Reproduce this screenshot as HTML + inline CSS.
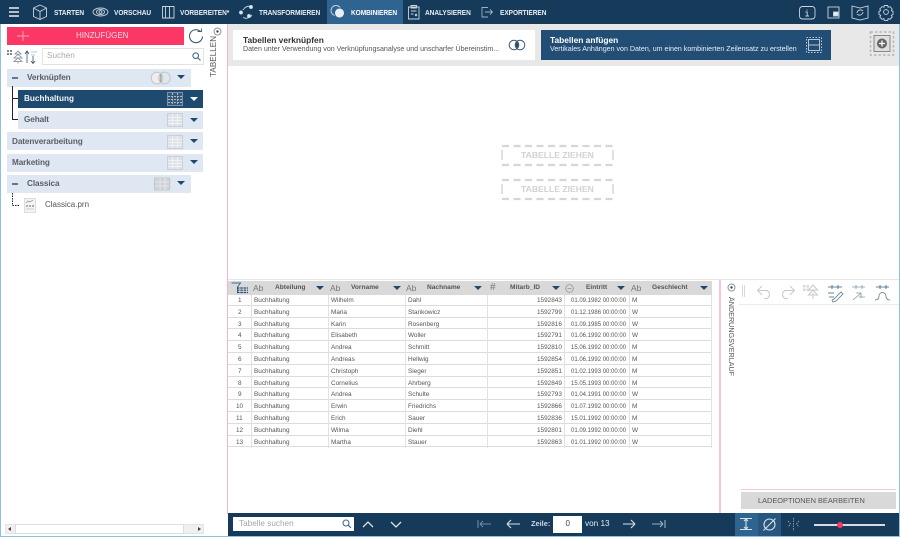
<!DOCTYPE html>
<html><head><meta charset="utf-8">
<style>
html,body{margin:0;padding:0;background:#fff}
#p{position:relative;width:900px;height:537px;overflow:hidden;background:#fff;font-family:"Liberation Sans",sans-serif;color:#444}
#p div,#p svg,#p span.a{position:absolute}
.t{white-space:nowrap;line-height:1}
.nav{font-size:7.2px;font-weight:bold;color:#e8eef4;top:9px;letter-spacing:-.05px;transform-origin:left top;transform:scaleX(.91)}
.bar{background:#dfe7f3;height:18px}
.bl{font-size:8.2px;font-weight:bold;color:#5a5f66;letter-spacing:-.1px}
.tri{width:0;height:0;border-left:4.5px solid transparent;border-right:4.5px solid transparent;border-top:4.5px solid #1f4a70}
.r{height:11.8px;left:228px;width:484px;border-bottom:1px solid #dcdcdc;box-sizing:border-box;font-size:6.4px;color:#555;line-height:14px}
.r span{position:absolute;top:0;white-space:nowrap}
.r span.d{font-size:6px;left:343px}
.th{font-size:6.6px;font-weight:bold;color:#555;top:285px}
.ab{font-size:8.5px;color:#777;top:283.5px}
.htri{top:286px;width:0;height:0;border-left:4px solid transparent;border-right:4px solid transparent;border-top:4px solid #1f4a70}
.dz{font-size:8.6px;font-weight:bold;color:#d2d2d2;left:521px}
</style></head><body><div id="p">
<!-- top bar -->
<div style="left:0;top:0;width:900px;height:24px;background:#163a59"></div>
<div style="left:327px;top:0;width:76px;height:24px;background:#2f6490"></div>
<svg style="left:0;top:0" width="900" height="24" fill="none" stroke="#c8d5df" stroke-width=".9">
<path d="M9 8h10M9 12h10M9 16h10" stroke-width="1.4" stroke="#e8eef4"/>
<path d="M40 5l6.500 3v8.500L40 19.500l-6.500-3V8zM33.500 8l6.500 3.500 6.500-3.500M40 11.500v8"/>
<ellipse cx="100.500" cy="12" rx="7.500" ry="4"/><ellipse cx="100.500" cy="12" rx="4" ry="2.600"/><circle cx="100.500" cy="12" r="1.400"/>
<path d="M162.500 6.500h11.500v11.500h-11.500zM165.500 6.500v11.500M169.500 6.500v11.500"/>
<path d="M243 10a7 7 0 0 1 8-3.500M252 15a7 7 0 0 1-9 2.500"/><circle cx="251" cy="7" r="1.500" fill="#e8eef4"/><circle cx="241" cy="12.500" r="1.500" fill="#e8eef4"/><circle cx="249" cy="16" r="1.500" fill="#e8eef4"/>
<circle cx="336" cy="10.500" r="5"/><circle cx="339.500" cy="13" r="5" fill="#e8eef4" stroke="#2f6490"/>
<path d="M408.500 7h10.500v12h-10.500zM411 5.500h5.500v2.500h-5.500zM411 11h5.500M411 14h2.500M415 14l2 2M417 14l-2 2"/>
<path d="M488 7.500h-6v9.500h6M485 12h7.500M490 9.500l2.500 2.500-2.500 2.500" stroke="#9fb1c0"/>
<rect x="799.500" y="6.500" width="15.500" height="12.500" rx="3"/><path d="M807 9.500v1M805.500 12h1.700v4M805.500 16h3.500" />
<rect x="828" y="7" width="11" height="11"/><rect x="833.500" y="12" width="4.500" height="4" fill="#e8eef4"/>
<path d="M852 6l8 2 8-2v12l-8 2-8-2z"/><path d="M857 13a3.500 3.500 0 0 1 6-2M863 12a3.500 3.500 0 0 1-6 2"/>
<circle cx="886" cy="12" r="2.400"/><path d="M884.300 5.500h3.400l.4 1.800 1.800-.7 2.300 2.300-.9 1.700 1.700.7v3.300l-1.700.7.900 1.700-2.300 2.300-1.800-.7-.4 1.800h-3.400l-.4-1.800-1.800.7-2.300-2.300.9-1.700-1.700-.7v-3.300l1.700-.7-.9-1.700 2.300-2.300 1.800.7z"/>
</svg>
<div class="t nav" style="left:54px">STARTEN</div>
<div class="t nav" style="left:114px">VORSCHAU</div>
<div class="t nav" style="left:180px">VORBEREITEN*</div>
<div class="t nav" style="left:259px">TRANSFORMIEREN</div>
<div class="t nav" style="left:351px;color:#fff">KOMBINIEREN</div>
<div class="t nav" style="left:425px">ANALYSIEREN</div>
<div class="t nav" style="left:500px">EXPORTIEREN</div>

<!-- borders -->
<div style="left:0;top:24px;width:1px;height:513px;background:#8cc3e3"></div>
<div style="left:899px;top:24px;width:1px;height:513px;background:#8cc3e3"></div>
<div style="left:0;top:536px;width:900px;height:1px;background:#8cc3e3"></div>
<div style="left:227px;top:24px;width:1px;height:490px;background:#f9b4cb"></div>

<!-- left panel -->
<div style="left:7px;top:27px;width:177px;height:18px;background:#fb3766"></div>
<svg style="left:16px;top:30px" width="14" height="12" stroke="#ff9cb4" fill="none"><path d="M7 1v10M1 6h12"/></svg>
<div class="t" style="left:76px;top:32px;font-size:8px;color:#ffd9e2">HINZUFÜGEN</div>
<svg style="left:188px;top:28px" width="16" height="17" fill="none" stroke="#3b5d78" stroke-width="1.100"><path d="M12.500 3.500a6.500 6.500 0 1 0 2 5"/><path d="M9.500 3.500h4v-3" stroke-width=".9"/></svg>
<svg style="left:213px;top:27px" width="9" height="9" fill="none" stroke="#8a97a3"><circle cx="4.500" cy="4.500" r="3.500"/><circle cx="4.500" cy="4.500" r="1.200" fill="#33475a" stroke="none"/></svg>
<div class="t" style="left:210px;top:77px;font-size:8px;color:#555;transform:rotate(-90deg);transform-origin:left top;letter-spacing:.1px">TABELLEN</div>

<svg style="left:7px;top:48px" width="34" height="17" fill="none" stroke="#7b8b99" stroke-width=".8"><path d="M0 2h2v2H0zM3 2h2v2H3zM0 5h2v2H0zM3 5h2v2H3z" fill="#7b8b99" stroke="none"/><path d="M11 3l-3 3h6zM11 6.500l-4 3.500h8zM11 10l-4 3.500h8zM11 13.500v2"/><path d="M20 15V3.500M18 6l2-3 2 3M26 8v7.500M24 13l2 2.500 2-2.500" stroke="#33556f"/><path d="M24 4h6M24 7h4" stroke="#aab3bb"/></svg>
<div style="left:42px;top:48px;width:162px;height:17px;box-sizing:border-box;border:1px solid #e2e2e2"></div>
<div class="t" style="left:47px;top:52px;font-size:8.200px;color:#a9a9a9">Suchen</div>
<svg style="left:192px;top:52px" width="9" height="9" fill="none" stroke="#3f6b8e" stroke-width="1.100"><circle cx="3.700" cy="3.700" r="2.800"/><path d="M6 6l2.500 2.500"/></svg>

<!-- tree -->
<div class="bar" style="left:7px;top:69px;width:184px"></div>
<div style="left:12px;top:77px;width:6px;height:1.500px;background:#5d7a94"></div>
<div class="t bl" style="left:27px;top:74px">Verknüpfen</div>
<svg style="left:149px;top:71px" width="24" height="14" fill="none" stroke="#c8c8c8" stroke-width="1.100"><circle cx="8" cy="7" r="5.800" fill="#eee"/><circle cx="15.500" cy="7" r="5.800"/><path d="M11.700 3v8" stroke="#aaa" stroke-width="1.800"/></svg>
<div class="tri" style="left:177px;top:75px"></div>

<svg style="left:11px;top:86px" width="9" height="38" fill="none" stroke="#222" stroke-width="1"><path d="M1.500 0v33.500H7M1.500 12.500H7"/></svg>

<div style="left:18px;top:90px;width:185px;height:18px;background:#1f4a70"></div>
<div class="t" style="left:24px;top:95px;font-size:8.200px;font-weight:bold;color:#f0f4f8">Buchhaltung</div>
<svg style="left:167px;top:92px" width="16" height="14"><rect x=".5" y=".5" width="15" height="13" fill="#36597a" stroke="#7b93a8"/><path d="M1 4.500h14M1 7.500h14M1 10.500h14M5.500 1v12M10.500 1v12" stroke="#a9bac9" stroke-width="1" stroke-dasharray="2 1"/></svg>
<div class="tri" style="left:190px;top:97px;border-top-color:#fff;border-top-width:4px"></div>

<div class="bar" style="left:18px;top:111px;width:185px"></div>
<div class="t bl" style="left:24px;top:116px">Gehalt</div>
<svg style="left:167px;top:113px" width="16" height="14"><rect x=".5" y=".5" width="15" height="13" fill="#dde1e8" stroke="#ccd0d6"/><path d="M1 4.500h14M1 7.500h14M1 10.500h14M5.500 1v12M10.500 1v12" stroke="#f2f2f2"/></svg>
<div class="tri" style="left:190px;top:118px"></div>

<div class="bar" style="left:7px;top:132px;width:196px"></div>
<div class="t bl" style="left:12px;top:137.500px">Datenverarbeitung</div>
<svg style="left:167px;top:135px" width="16" height="14"><rect x=".5" y=".5" width="15" height="13" fill="#dde1e8" stroke="#ccd0d6"/><path d="M1 4.500h14M1 7.500h14M1 10.500h14M5.500 1v12M10.500 1v12" stroke="#f2f2f2"/></svg>
<div class="tri" style="left:190px;top:139px"></div>

<div class="bar" style="left:7px;top:154px;width:196px"></div>
<div class="t bl" style="left:12px;top:159px">Marketing</div>
<svg style="left:167px;top:156px" width="16" height="14"><rect x=".5" y=".5" width="15" height="13" fill="#dde1e8" stroke="#ccd0d6"/><path d="M1 4.500h14M1 7.500h14M1 10.500h14M5.500 1v12M10.500 1v12" stroke="#f2f2f2"/></svg>
<div class="tri" style="left:190px;top:160px"></div>

<div class="bar" style="left:7px;top:175px;width:184px"></div>
<div style="left:12px;top:183px;width:6px;height:1.500px;background:#5d7a94"></div>
<div class="t bl" style="left:27px;top:180px">Classica</div>
<svg style="left:154px;top:177px" width="17" height="14"><rect x=".5" y="1" width="15" height="12" fill="#cfd3d8" stroke="#c4c8cd"/><path d="M1 5h14M1 9h14M6 1v12M11 1v12" stroke="#e6e6e6"/><path d="M16 2v10" stroke="#c4c8cd" stroke-dasharray="1 1"/></svg>
<div class="tri" style="left:177px;top:181px"></div>

<svg style="left:11px;top:193px" width="9" height="15" fill="none" stroke="#222" stroke-dasharray="1.500 1"><path d="M1.500 0v12.500H8"/></svg>
<svg style="left:24px;top:198px" width="12" height="15" fill="none"><rect x=".5" y=".5" width="11" height="14" fill="#f4f4f4" stroke="#ddd"/><path d="M2 5l2-2 2 1 3-2" stroke="#888" stroke-width=".7"/><path d="M2 8h2M5 8h2M8 8h2" stroke="#666" stroke-width="1"/><path d="M2 11h8" stroke="#ccc"/></svg>
<div class="t" style="left:45px;top:201px;font-size:8px;color:#555">Classica.prn</div>

<!-- left scrollbar -->
<div style="left:5px;top:524px;width:199px;height:10px;background:#f0f0f0;border:1px solid #e3e3e3;box-sizing:border-box"></div>
<div style="left:15px;top:524px;width:169px;height:10px;background:#fff;border:1px solid #ddd;box-sizing:border-box"></div>
<div style="left:8px;top:527px;border-right:3px solid #444;border-top:2px solid transparent;border-bottom:2px solid transparent"></div>
<div style="left:198px;top:527px;border-left:3px solid #444;border-top:2px solid transparent;border-bottom:2px solid transparent"></div>

<!-- top grey strip -->
<div style="left:228px;top:24px;width:671px;height:42px;background:#e8e8e8"></div>
<div style="left:233px;top:30px;width:302px;height:30px;background:#fff"></div>
<div class="t" style="left:243px;top:36px;font-size:8.400px;font-weight:bold;color:#333">Tabellen verknüpfen</div>
<div class="t" style="left:243px;top:46px;font-size:7.080px;color:#555">Daten unter Verwendung von Verknüpfungsanalyse und unscharfer Übereinstim...</div>
<svg style="left:508px;top:39px" width="18" height="12" fill="none" stroke="#3f5d78"><circle cx="6" cy="6" r="4.800"/><circle cx="12" cy="6" r="4.800"/><path d="M9 2.500a4.800 4.800 0 0 1 0 7a4.800 4.800 0 0 1 0-7z" fill="#27496a"/></svg>
<div style="left:541px;top:30px;width:290px;height:30px;background:#224e75"></div>
<div class="t" style="left:550px;top:36px;font-size:8.400px;font-weight:bold;color:#fff">Tabellen anfügen</div>
<div class="t" style="left:550px;top:46px;font-size:7.080px;color:#e8eef4">Vertikales Anhängen von Daten, um einen kombinierten Zeilensatz zu erstellen</div>
<svg style="left:805px;top:36px" width="18" height="18" fill="none" stroke="#b6c6d4"><rect x="1.500" y="1.500" width="15" height="15" stroke-dasharray="1.500 1.500"/><rect x="3.500" y="3.500" width="11" height="11"/><path d="M3.500 9h11"/></svg>
<svg style="left:869px;top:30px" width="26" height="26" fill="none"><rect x="1.500" y="2" width="23" height="23" stroke="#b5b5b5" stroke-width="1.500" stroke-dasharray="2.500 2"/><rect x="5" y="5.500" width="16" height="16" stroke="#888" fill="#dfdfdf"/><circle cx="13" cy="13.500" r="5" fill="#666"/><path d="M10 13.500h6M13 10.500v6" stroke="#fff" stroke-width="1.300"/></svg>

<!-- drop zones -->
<svg style="left:500px;top:144px" width="116" height="60" fill="none" stroke="#d6d6d6" stroke-width="2.200">
<path d="M2 2H114" stroke-dasharray="7 4.500"/><path d="M2 21H114" stroke-dasharray="7 4.500"/><path d="M2 6v10M113 6v10" stroke-width="1.500"/>
<path d="M2 36H114" stroke-dasharray="7 4.500"/><path d="M2 55H114" stroke-dasharray="7 4.500"/><path d="M2 40v10M113 40v10" stroke-width="1.500"/>
</svg>
<div class="t dz" style="top:151px">TABELLE ZIEHEN</div>
<div class="t dz" style="top:185px">TABELLE ZIEHEN</div>

<!-- table -->
<div style="left:228px;top:279px;width:671px;height:1px;background:#e6e6e6"></div>
<div style="left:228px;top:281px;width:484px;height:14px;background:#d9d9d9"></div>
<svg style="left:231px;top:282px" width="18" height="12" fill="none" stroke="#3f6b8e"><path d="M.5 1h9L6.500 5v6" /><path d="M6 6h11M6 8.200h11M6 10.500h11" stroke="#1f4a70" stroke-dasharray="2.500 .8" stroke-width="1.200"/></svg>
<div class="t ab" style="left:253px">Ab</div><div class="t th" style="left:275px">Abteilung</div><div class="htri" style="left:316px"></div>
<div class="t ab" style="left:330px">Ab</div><div class="t th" style="left:351px">Vorname</div><div class="htri" style="left:393px"></div>
<div class="t ab" style="left:406px">Ab</div><div class="t th" style="left:427px">Nachname</div><div class="htri" style="left:474px"></div>
<div class="t" style="left:490px;top:282.500px;font-size:10px;color:#777">#</div><div class="t th" style="left:510px">Mitarb_ID</div><div class="htri" style="left:552px"></div>
<svg style="left:565px;top:284px" width="9" height="9" fill="none" stroke="#888" stroke-width=".7"><circle cx="4.500" cy="4.500" r="3.800"/><path d="M2.500 4.500h4"/></svg>
<div class="t th" style="left:586px">Eintritt</div><div class="htri" style="left:617px"></div>
<div class="t ab" style="left:631px">Ab</div><div class="t th" style="left:652px">Geschlecht</div><div class="htri" style="left:700px"></div>

<div class="r" style="top:294px"><span style="left:10px">1</span><span style="left:26px">Buchhaltung</span><span style="left:103px">Wilhelm</span><span style="left:180px">Dahl</span><span style="left:309px">1592843</span><span class="d">01.09.1982 00:00:00</span><span style="left:404px">M</span></div>
<div class="r" style="top:305.800px"><span style="left:10px">2</span><span style="left:26px">Buchhaltung</span><span style="left:103px">Maria</span><span style="left:180px">Stankowicz</span><span style="left:309px">1592799</span><span class="d">01.12.1986 00:00:00</span><span style="left:404px">W</span></div>
<div class="r" style="top:317.600px"><span style="left:10px">3</span><span style="left:26px">Buchhaltung</span><span style="left:103px">Karin</span><span style="left:180px">Rosenberg</span><span style="left:309px">1592816</span><span class="d">01.09.1985 00:00:00</span><span style="left:404px">W</span></div>
<div class="r" style="top:329.400px"><span style="left:10px">4</span><span style="left:26px">Buchhaltung</span><span style="left:103px">Elisabeth</span><span style="left:180px">Woller</span><span style="left:309px">1592791</span><span class="d">01.06.1992 00:00:00</span><span style="left:404px">W</span></div>
<div class="r" style="top:341.200px"><span style="left:10px">5</span><span style="left:26px">Buchhaltung</span><span style="left:103px">Andrea</span><span style="left:180px">Schmitt</span><span style="left:309px">1592810</span><span class="d">15.06.1992 00:00:00</span><span style="left:404px">M</span></div>
<div class="r" style="top:353px"><span style="left:10px">6</span><span style="left:26px">Buchhaltung</span><span style="left:103px">Andreas</span><span style="left:180px">Hellwig</span><span style="left:309px">1592854</span><span class="d">01.06.1992 00:00:00</span><span style="left:404px">M</span></div>
<div class="r" style="top:364.800px"><span style="left:10px">7</span><span style="left:26px">Buchhaltung</span><span style="left:103px">Christoph</span><span style="left:180px">Sieger</span><span style="left:309px">1592851</span><span class="d">01.02.1993 00:00:00</span><span style="left:404px">M</span></div>
<div class="r" style="top:376.600px"><span style="left:10px">8</span><span style="left:26px">Buchhaltung</span><span style="left:103px">Cornelius</span><span style="left:180px">Ahrberg</span><span style="left:309px">1592849</span><span class="d">15.05.1993 00:00:00</span><span style="left:404px">M</span></div>
<div class="r" style="top:388.400px"><span style="left:10px">9</span><span style="left:26px">Buchhaltung</span><span style="left:103px">Andrea</span><span style="left:180px">Schulte</span><span style="left:309px">1592793</span><span class="d">01.04.1991 00:00:00</span><span style="left:404px">W</span></div>
<div class="r" style="top:400.200px"><span style="left:8px">10</span><span style="left:26px">Buchhaltung</span><span style="left:103px">Erwin</span><span style="left:180px">Friedrichs</span><span style="left:309px">1592866</span><span class="d">01.07.1992 00:00:00</span><span style="left:404px">M</span></div>
<div class="r" style="top:412px"><span style="left:8px">11</span><span style="left:26px">Buchhaltung</span><span style="left:103px">Erich</span><span style="left:180px">Sauer</span><span style="left:309px">1592836</span><span class="d">15.01.1992 00:00:00</span><span style="left:404px">M</span></div>
<div class="r" style="top:423.800px"><span style="left:8px">12</span><span style="left:26px">Buchhaltung</span><span style="left:103px">Wilma</span><span style="left:180px">Diehl</span><span style="left:309px">1592801</span><span class="d">01.09.1992 00:00:00</span><span style="left:404px">W</span></div>
<div class="r" style="top:435.600px"><span style="left:8px">13</span><span style="left:26px">Buchhaltung</span><span style="left:103px">Martha</span><span style="left:180px">Stauer</span><span style="left:309px">1592863</span><span class="d">01.01.1992 00:00:00</span><span style="left:404px">W</span></div>
<!-- column lines -->
<div style="left:251px;top:295px;width:1px;height:153px;background:#e2e2e2"></div>
<div style="left:328px;top:295px;width:1px;height:153px;background:#e2e2e2"></div>
<div style="left:405px;top:295px;width:1px;height:153px;background:#e2e2e2"></div>
<div style="left:487px;top:295px;width:1px;height:153px;background:#e2e2e2"></div>
<div style="left:564px;top:295px;width:1px;height:153px;background:#e2e2e2"></div>
<div style="left:629px;top:295px;width:1px;height:153px;background:#e2e2e2"></div>
<div style="left:711px;top:295px;width:1px;height:153px;background:#e2e2e2"></div>

<!-- right history panel -->
<div style="left:719px;top:280px;width:1.500px;height:233px;background:#fbc3d5"></div>
<div style="left:739px;top:304px;width:160px;height:1px;background:#ececec"></div>
<svg style="left:727px;top:283px" width="9" height="9" fill="none" stroke="#8a97a3"><circle cx="4.500" cy="4.500" r="3.500"/><circle cx="4.500" cy="4.500" r="1.200" fill="#33475a" stroke="none"/></svg>
<div class="t" style="left:735px;top:297px;font-size:7.200px;color:#555;transform:rotate(90deg);transform-origin:left top">ÄNDERUNGSVERLAUF</div>
<svg style="left:740px;top:282px" width="155" height="22" fill="none" stroke="#c4c9ce" stroke-width="1">
<path d="M2 4h1M4 4h1M2 6h1M4 6h1M2 8h1M4 8h1M2 10h1M4 10h1M2 12h1M4 12h1M2 14h1M4 14h1" stroke="#999" stroke-width=".8"/>
<path d="M22 13l-4.500-4.500L22 4M17.500 8.500H27a4.500 4.500 0 0 1 0 8h-3"/>
<path d="M50 13l4.500-4.500L50 4M54.500 8.500H45a4.500 4.500 0 0 0 0 8h3"/>
<path d="M63 3h2.500v2.500H63zM66.500 3H69v2.500h-2.500zM63 6.500h2.500V9H63zM66.500 6.500H69V9h-2.500z" fill="#d6dadd" stroke="none"/><path d="M73 3l-4.500 5h9zM73 8l-4.500 5h9zM73 11v6"/>
<path d="M88 5h14M92 3v4M98 3v4" stroke="#3a5f7f" stroke-width=".8"/><path d="M88 11h6M89 15h5" stroke="#3a5f7f" stroke-width=".8"/><path d="M92 18l2-1 7-7 2 2-7 7-3 1z" stroke="#5d7a94" stroke-width=".8"/>
<path d="M112 5h13M116 3v4M122 3v4" stroke="#8597a6" stroke-width=".8"/><path d="M113 18l8-7M116 11h5v5M119 15h6" stroke="#8597a6" stroke-width=".8"/>
<path d="M136 5h13M140 3v4M146 3v4" stroke="#3a5f7f" stroke-width=".8"/><path d="M135 18c3 0 4-2 4-4a3.500 3.500 0 0 1 7 0c0 2 1 4 4 4" stroke="#5d7a94" stroke-width=".8"/>
</svg>
<div style="left:741px;top:492px;width:155px;height:17px;background:#d9d9d9"></div>
<div style="left:741px;top:488.500px;width:155px;height:1.500px;background:#fbc3d5"></div>
<div class="t" style="left:758px;top:496.500px;font-size:7.400px;color:#555">LADEOPTIONEN BEARBEITEN</div>

<!-- bottom bar -->
<div style="left:228px;top:513px;width:671px;height:23px;background:#163a59"></div>
<div style="left:735px;top:513px;width:23px;height:23px;background:#2f6490"></div>
<div style="left:758px;top:513px;width:23px;height:23px;background:#28567e"></div>
<div style="left:233px;top:517px;width:121px;height:14px;background:#fff"></div>
<div class="t" style="left:239px;top:520px;font-size:8.200px;color:#a5a5a5">Tabelle suchen</div>
<svg style="left:342px;top:519px" width="10" height="10" fill="none" stroke="#3f6b8e" stroke-width="1.100"><circle cx="4" cy="4" r="3"/><path d="M6.300 6.300L9 9"/></svg>
<svg style="left:228px;top:514px" width="671" height="22" fill="none" stroke="#d8e2ea" stroke-width="1.100">
<path d="M135 13l5-5 5 5M163 8l5 5 5-5" stroke-width="1.300"/>
<path d="M250 6v8M252 10h11M252 10l3-3M252 10l3 3" stroke="#6f8ba2"/>
<path d="M279 10h13M279 10l4-4M279 10l4 4"/>
<path d="M395 10h12M407 10l-4-4M407 10l-4 4"/>
<path d="M424 10h11M435 10l-3-3M435 10l-3 3M437 6v8" stroke="#9fb1c0"/>
<path d="M512 4.500h12M512 15.500h12M518 4.500v11M516 7l2-2 2 2M516 13l2 2 2-2"/>
<circle cx="541.500" cy="10.500" r="5.500"/><path d="M535.500 16.500l12-12"/>
<path d="M560 7l2.500 3-2.500 3M571 7l-2.500 3 2.500 3M565.500 4v13" stroke="#9fb1c0" stroke-width=".8" stroke-dasharray="1.500 1"/>
</svg>
<div class="t" style="left:531px;top:520px;font-size:7.400px;font-weight:bold;color:#cfd9e2">Zeile:</div>
<div style="left:553px;top:516px;width:29px;height:17px;background:#fff"></div>
<div class="t" style="left:565.500px;top:520px;font-size:8px;color:#444">0</div>
<div class="t" style="left:585px;top:520px;font-size:8.200px;color:#e4eaef">von 13</div>
<div style="left:814px;top:523.500px;width:71px;height:2px;background:#d5dde4"></div>
<div style="left:836.500px;top:521.500px;width:6px;height:6px;border-radius:50%;background:#fb3766"></div>
</div></body></html>
